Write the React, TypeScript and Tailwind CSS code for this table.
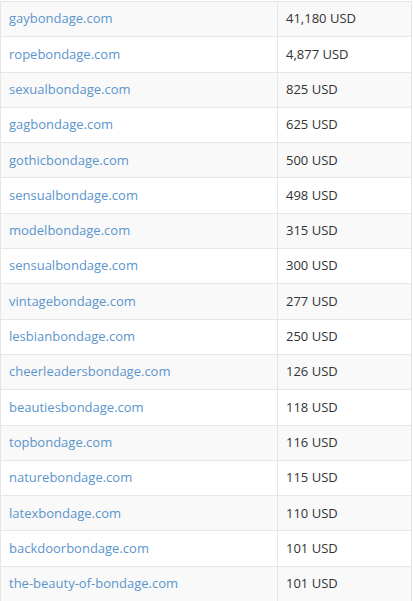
import React from "react";

const sales: [string, string][] = [
  ["gaybondage.com", "41,180 USD"],
  ["ropebondage.com", "4,877 USD"],
  ["sexualbondage.com", "825 USD"],
  ["gagbondage.com", "625 USD"],
  ["gothicbondage.com", "500 USD"],
  ["sensualbondage.com", "498 USD"],
  ["modelbondage.com", "315 USD"],
  ["sensualbondage.com", "300 USD"],
  ["vintagebondage.com", "277 USD"],
  ["lesbianbondage.com", "250 USD"],
  ["cheerleadersbondage.com", "126 USD"],
  ["beautiesbondage.com", "118 USD"],
  ["topbondage.com", "116 USD"],
  ["naturebondage.com", "115 USD"],
  ["latexbondage.com", "110 USD"],
  ["backdoorbondage.com", "101 USD"],
  ["the-beauty-of-bondage.com", "101 USD"],
];

export default function App() {
  return (
    <div className="w-[413px] h-[601px] overflow-hidden bg-white font-['Open_Sans',sans-serif] text-[13px] pt-px">
      <div className="border-l border-r border-[#e6e6e6] w-[412px]">
        {sales.map(([domain, price], i) => (
          <div
            key={i}
            className={`flex h-[35.3px] border-t border-[#e6e6e6] ${
              i % 2 === 0 ? "bg-[#f9f9f9]" : "bg-white"
            }`}
          >
            <div className="w-[277px] flex items-center pl-[8px] border-r border-[#e6e6e6]">
              <a href="#" className="text-[#5b95cc]">
                {domain}
              </a>
            </div>
            <div className="flex-1 flex items-center pl-[8px] text-[#333]">
              {price}
            </div>
          </div>
        ))}
      </div>
    </div>
  );
}
